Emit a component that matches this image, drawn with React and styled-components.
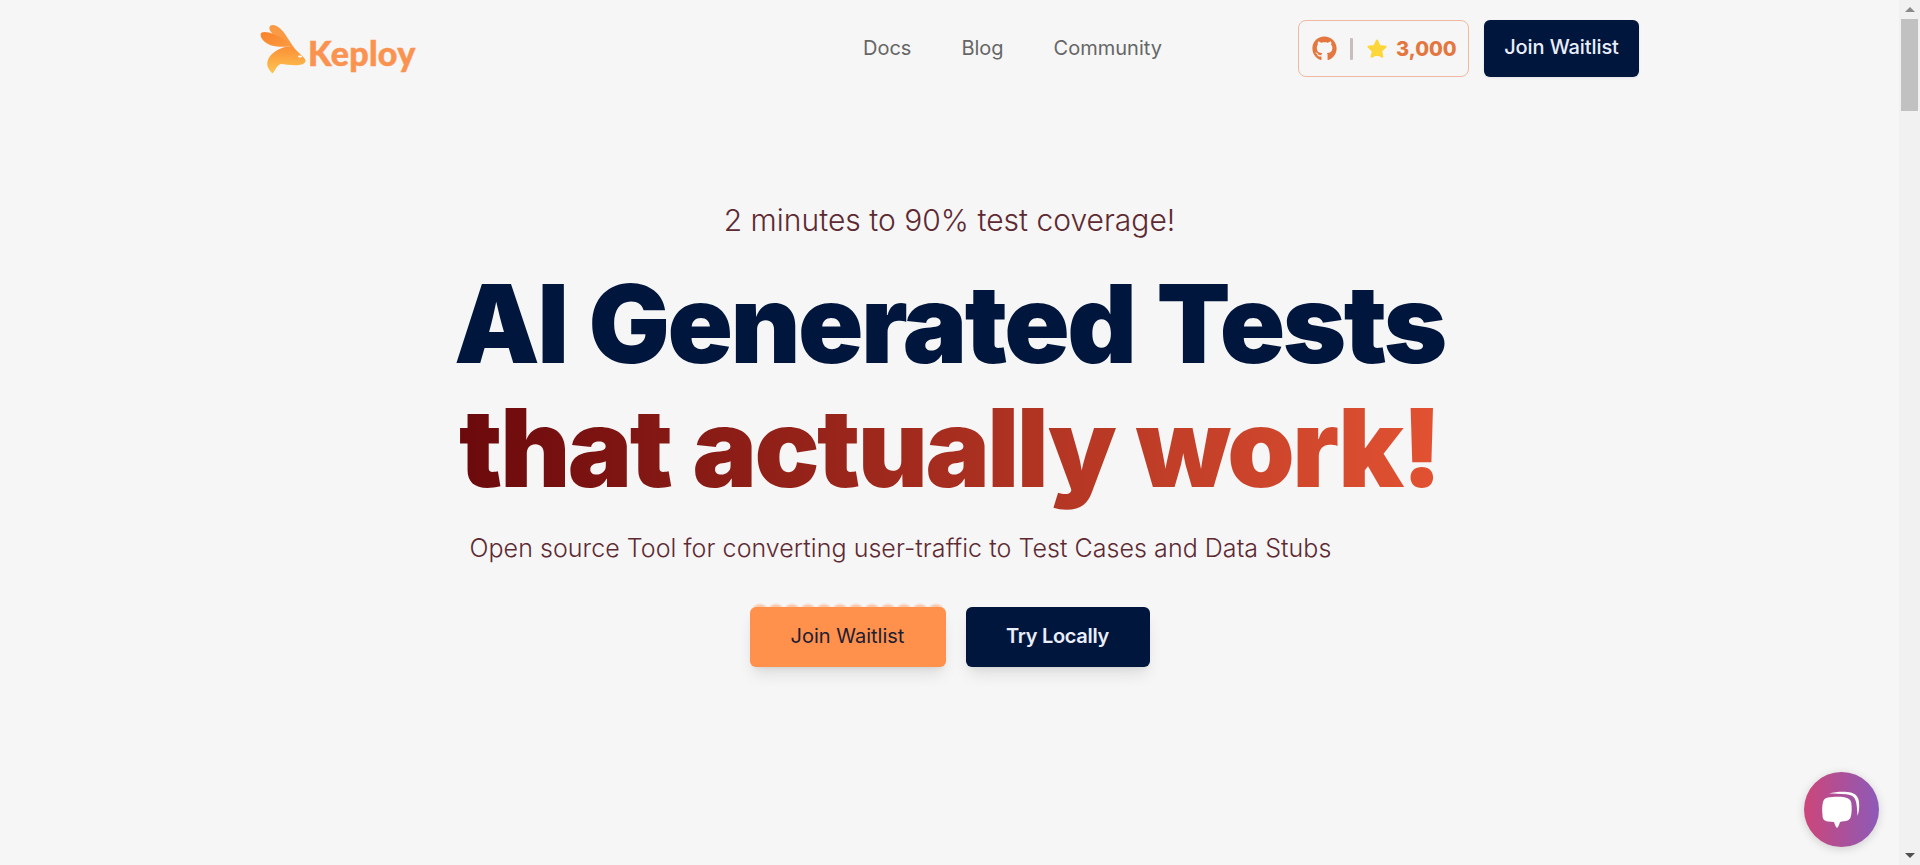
import React from "react";
import styled, { createGlobalStyle } from "styled-components";
import { FaGithub } from "react-icons/fa";

const GlobalReset = createGlobalStyle`
  *, *::before, *::after {
    box-sizing: border-box;
  }

  html, body {
    margin: 0;
    padding: 0;
    height: 100%;
    overflow: hidden;
  }

  body {
    font-family: Inter, "Liberation Sans", sans-serif;
    background-color: #f6f6f6;
  }
`;

const Window = styled.div`
  display: flex;
  height: 100vh;
  overflow: hidden;
`;

const Page = styled.main`
  flex: 1;
  min-width: 0;
`;

/* Drawn scrollbar, the browser hides its own in the shot */
const ScrollTrack = styled.div`
  flex: none;
  width: 21px;
  display: flex;
  flex-direction: column;
  background-color: #f1f1f1;
`;

const ScrollArrow = styled.div`
  flex: none;
  height: 19px;
  display: flex;
  align-items: center;
  justify-content: center;
  margin-top: ${({ $down }) => ($down ? "auto" : "0")};

  &::after {
    content: "";
    width: 0;
    height: 0;
    border-left: 5px solid transparent;
    border-right: 5px solid transparent;
    ${({ $down }) =>
      $down ? "border-top: 5px solid #505050;" : "border-bottom: 5px solid #8a8a8a;"}
  }
`;

const ScrollThumb = styled.div`
  flex: none;
  height: 92px;
  margin: 0 2px;
  background-color: #c1c1c1;
`;

const Header = styled.header`
  max-width: 1379px;
  margin: 0 auto;
  padding: 20px 0;
  display: flex;
  align-items: center;
`;

const Logo = styled.a`
  display: flex;
  align-items: center;
  width: 445px;
  text-decoration: none;
`;

const LogoText = styled.span`
  font-family: Lato, sans-serif;
  font-weight: 900;
  font-size: 34px;
  letter-spacing: 0.3px;
  color: #fb9350;
  -webkit-text-stroke: 0.5px #fb9350;
  margin-top: 7px;
`;

const NavLinks = styled.nav`
  display: flex;
  gap: 50px;
  margin: 0 0 2px 158px;
`;

const NavLink = styled.a`
  font-size: 20px;
  line-height: 28px;
  color: #666666;
`;

const Actions = styled.div`
  margin-left: auto;
  display: flex;
  align-items: center;
  gap: 15px;
`;

const StarsBadge = styled.a`
  width: 171px;
  height: 57px;
  padding-left: 13px;
  display: flex;
  align-items: center;
  border: 1px solid #efb8a0;
  border-radius: 8px;
  color: #e4773f;
  font-size: 20px;
  font-weight: 800;

  svg {
    flex: none;
  }
`;

const BadgeDivider = styled.span`
  width: 3px;
  height: 22px;
  margin: 0 13px 0 13px;
  background-color: #c9bcbc;
  border-radius: 1px;
`;

const BadgeCount = styled.span`
  margin-left: 8px;
`;

const Button = styled.button`
  position: relative;
  height: ${({ $tall }) => ($tall ? "60px" : "57px")};
  width: ${({ $width }) => $width}px;
  padding: 0 0 ${({ $tall }) => ($tall ? "2px" : "3px")};
  border: none;
  border-radius: 6px;
  font-family: inherit;
  font-size: 20px;
  font-weight: ${({ $strong }) => ($strong ? 600 : 500)};
  letter-spacing: ${({ $strong }) => ($strong ? "-0.3px" : "-0.1px")};
  color: ${({ $light }) => ($light ? "#e9eefa" : "#1c2033")};
  background-color: ${({ $light }) => ($light ? "#00163d" : "#ff914d")};
  box-shadow: ${({ $tall }) =>
    $tall ? "0 10px 15px -3px rgba(0, 0, 0, 0.1), 0 4px 6px -4px rgba(0, 0, 0, 0.1)" : "0 1px 3px rgba(0, 0, 0, 0.08)"};
`;

/* the scalloped fade along the top edge of the orange button */
const OrangeButton = styled(Button)`
  font-weight: 400;
  letter-spacing: 0;

  &::before {
    content: "";
    position: absolute;
    left: 2px;
    right: 2px;
    top: -4px;
    height: 5px;
    background: radial-gradient(ellipse 8px 5px at 8px 100%, rgba(255, 145, 77, 0.45) 50%, transparent 100%) 0 0 / 16px 100% repeat-x;
  }
`;

const Hero = styled.section`
  display: flex;
  flex-direction: column;
  align-items: center;
  padding-top: 103px;
`;

const Kicker = styled.p`
  margin: 0;
  font-size: 30px;
  font-weight: 300;
  letter-spacing: 0.02px;
  line-height: 40px;
  color: #5e2a32;
`;

const Title = styled.h1`
  margin: 22px 0 0;
  font-size: 108px;
  font-weight: 900;
  letter-spacing: -0.023em;
  word-spacing: 3px;
  line-height: 124px;
  text-align: center;
  color: #00163d;
`;

const TitleAccent = styled.span`
  display: inline-block;
  background-image: linear-gradient(90deg, #6b090c, #e25232);
  -webkit-background-clip: text;
  background-clip: text;
  color: transparent;
`;

const Tagline = styled.p`
  width: 960px;
  margin: 20px 0 0;
  font-size: 25px;
  font-weight: 300;
  letter-spacing: 0.05px;
  line-height: 36px;
  color: #5e2a32;
  text-align: left;
`;

const HeroButtons = styled.div`
  display: flex;
  gap: 20px;
  margin-top: 41px;
`;

const ChatBubble = styled.button`
  position: fixed;
  left: 1804px;
  top: 772px;
  width: 75px;
  height: 75px;
  padding: 0;
  border: none;
  border-radius: 50%;
  background-image: linear-gradient(90deg, #cc4679, #8d5ab8);
  box-shadow: 0 2px 10px rgba(0, 0, 0, 0.16);
  display: flex;
  align-items: center;
  justify-content: center;
`;

function RabbitMark() {
  return (
    <svg width="48" height="52" viewBox="9 6 48 52">
      <defs>
        <linearGradient id="earGrad" x1="0" y1="0" x2="1" y2="1">
          <stop offset="0" stopColor="#f9822c" />
          <stop offset="1" stopColor="#fb9b3f" />
        </linearGradient>
        <linearGradient id="bodyGrad" x1="0.5" y1="0" x2="0.5" y2="1">
          <stop offset="0" stopColor="#fb8f35" />
          <stop offset="1" stopColor="#fdc552" />
        </linearGradient>
      </defs>
      <path fill="#fa9a45" d="M19 9C23 6 29 10 34 17C38 23 42 29 45 34C37 28 24 21 20 15C18 13 18 10 19 9Z" />
      <path fill="url(#earGrad)" d="M10 16C14 13 24 17 32 22C36 24 39 26 41 29C33 30 21 31 14 25C10 22 9 18 10 16Z" />
      <path fill="url(#bodyGrad)" d="M21.6 56.6C17 52 15 48 17 43C19 37 26 32 36 29.5C40 29 44 31 46 34C49 37 53 40 54.5 43C55 46 52 47.5 48 48C42 49 34 47 30 47C26 48 25 52 21.6 56.6Z" />
      <ellipse cx="49" cy="39.5" rx="2" ry="1" fill="#fff" />
    </svg>
  );
}

function StarIcon() {
  return (
    <svg width="22" height="22" viewBox="0 0 22 22">
      <path
        fill="#fdd63a"
        stroke="#fdd63a"
        strokeWidth="2"
        strokeLinejoin="round"
        d="M11 2.5L13.6 8L19.6 8.8L15.2 12.9L16.3 18.8L11 15.9L5.7 18.8L6.8 12.9L2.4 8.8L8.4 8Z"
      />
    </svg>
  );
}

function ChatIcon() {
  return (
    <svg width="39" height="37" viewBox="0 0 39 37">
      <path
        fill="#fff"
        d="M7 2.5C14 .5 24 .5 29 1.5C34 3 36.5 6 37 11C37.5 16 37 21 35.5 25C35 18 35 12 33 8C31 4.5 28 3.5 24 3.2C18 2.8 12 2.8 7 2.5Z"
      />
      <path
        fill="#fff"
        d="M6 6.5C12 5.5 22 5.5 25 7C28 8 29.5 10 29.5 14C30 19 29.5 25 28 27.5C26 30 24 30 20 30.5L18 31C17 34 16 36.5 15 37C14 36.5 13 34 12 31L6 30.5C2 30 .5 28 .5 24C0 19 0 15 1 11C2 8 3.5 7 6 6.5Z"
      />
    </svg>
  );
}

export default function App() {
  return (
    <>
      <GlobalReset />
      <Window>
        <Page>
          <Header>
            <Logo>
              <RabbitMark />
              <LogoText>Keploy</LogoText>
            </Logo>
            <NavLinks>
              <NavLink>Docs</NavLink>
              <NavLink>Blog</NavLink>
              <NavLink>Community</NavLink>
            </NavLinks>
            <Actions>
              <StarsBadge>
                <FaGithub size={25} color="#e4773f" />
                <BadgeDivider />
                <StarIcon />
                <BadgeCount>3,000</BadgeCount>
              </StarsBadge>
              <Button $light $width={155}>Join Waitlist</Button>
            </Actions>
          </Header>
          <Hero>
            <Kicker>2 minutes to 90% test coverage!</Kicker>
            <Title>
              AI Generated Tests
              <br />
              <TitleAccent>that actually work!</TitleAccent>
            </Title>
            <Tagline>Open source Tool for converting user-traffic to Test Cases and Data Stubs</Tagline>
            <HeroButtons>
              <OrangeButton $tall $width={196}>Join Waitlist</OrangeButton>
              <Button $tall $light $strong $width={184}>Try Locally</Button>
            </HeroButtons>
          </Hero>
        </Page>
        <ScrollTrack>
          <ScrollArrow />
          <ScrollThumb />
          <ScrollArrow $down />
        </ScrollTrack>
      </Window>
      <ChatBubble aria-label="Open chat">
        <ChatIcon />
      </ChatBubble>
    </>
  );
}
